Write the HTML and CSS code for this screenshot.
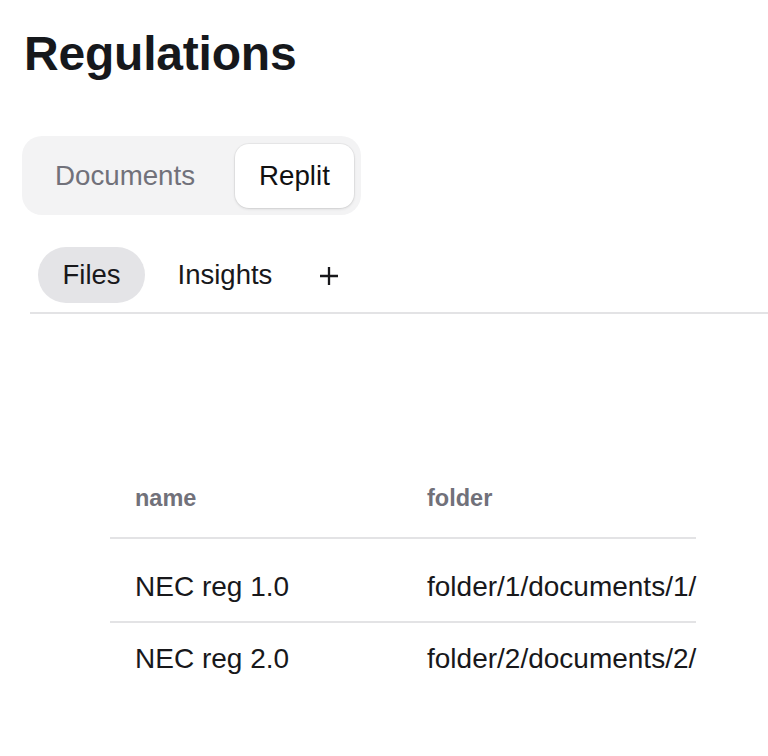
FILE: index.html
```html
<!DOCTYPE html>
<html>
<head>
<meta charset="utf-8">
<link rel="stylesheet" href="styles.css">
</head>
<body>
<div class="page">
  <h1 class="title">Regulations</h1>
  <div class="segmented">
    <button class="seg">Documents</button>
    <button class="seg seg-active">Replit</button>
  </div>
  <div class="tabs">
    <button class="tab tab-active">Files</button>
    <button class="tab">Insights</button>
    <button class="tab tab-add" aria-label="Add tab">
      <svg width="20" height="20" viewBox="0 0 20 20"><path d="M10 1v18M1 10h18" stroke="#18181b" stroke-width="2.3" fill="none"/></svg>
    </button>
  </div>
  <div class="table-wrap">
    <table class="files">
      <thead>
        <tr><th class="c-name">name</th><th class="c-folder">folder</th></tr>
      </thead>
      <tbody>
        <tr class="row-first"><td class="c-name">NEC reg 1.0</td><td class="c-folder">folder/1/documents/1/</td></tr>
        <tr class="row-last"><td class="c-name">NEC reg 2.0</td><td class="c-folder">folder/2/documents/2/</td></tr>
      </tbody>
    </table>
  </div>
</div>
</body>
</html>
```

FILE: styles.css
```css
* { box-sizing: border-box; }
html, body { margin: 0; padding: 0; background: #fff; }
body {
  font-family: "Liberation Sans", Arial, Helvetica, sans-serif;
  color: #18181b;
  overflow: hidden;
}
.page {
  padding: 22px 0 0 22px;
}
.title {
  margin: 0 0 0 2px;
  font-size: 48px;
  font-weight: 700;
  line-height: 64px;
  color: #16181c;
  letter-spacing: -0.2px;
}
.segmented {
  margin-top: 50px;
  display: inline-flex;
  align-items: center;
  gap: 15px;
  padding: 8px 7px 7px 8px;
  background: #f3f3f4;
  border-radius: 20px;
}
.seg {
  font-family: inherit;
  border: none;
  background: transparent;
  font-size: 27.7px;
  color: #71717a;
  height: 64px;
  padding: 0 25px;
  border-radius: 14px;
  cursor: pointer;
}
.seg-active {
  background: #fff;
  color: #111;
  padding: 0 24px;
  box-shadow: 0 1px 3px rgba(0,0,0,0.12), 0 0 0 1px rgba(0,0,0,0.04);
}
.tabs {
  margin-top: 32px;
  margin-left: 8px;
  display: flex;
  align-items: center;
  gap: 8px;
  padding: 0 0 9px 8px;
  border-bottom: 2px solid #e3e3e5;
}
.tab {
  font-family: inherit;
  border: none;
  background: transparent;
  font-size: 27.5px;
  color: #18181b;
  height: 56px;
  padding: 0 24.5px;
  border-radius: 28px;
}
.tab-active { background: #e4e4e7; }
.tab-add {
  width: 48px;
  padding: 0;
  display: flex;
  align-items: center;
  justify-content: center;
}
.tab-add svg { display: block; margin-top: 2px; }
.table-wrap {
  margin-top: 140px;
  margin-left: 88px;
  width: 586px;
}
.files {
  width: 586px;
  border-collapse: collapse;
  table-layout: fixed;
}
.files th {
  text-align: left;
  vertical-align: top;
  font-size: 23.5px;
  line-height: 24px;
  font-weight: 700;
  color: #71717a;
  height: 84px;
  border-bottom: 2px solid #e3e3e5;
  padding: 32px 0 0 25px;
}
.files td {
  font-size: 28px;
  line-height: 28px;
  vertical-align: top;
  padding: 0 0 0 25px;
  color: #18181b;
  white-space: nowrap;
}
.row-first td {
  height: 84px;
  padding-top: 34px;
  border-bottom: 2px solid #e3e3e5;
}
.row-last td {
  height: 84px;
  padding-top: 22px;
}
.c-name { width: 292px; }
.c-folder { width: 294px; }
```
